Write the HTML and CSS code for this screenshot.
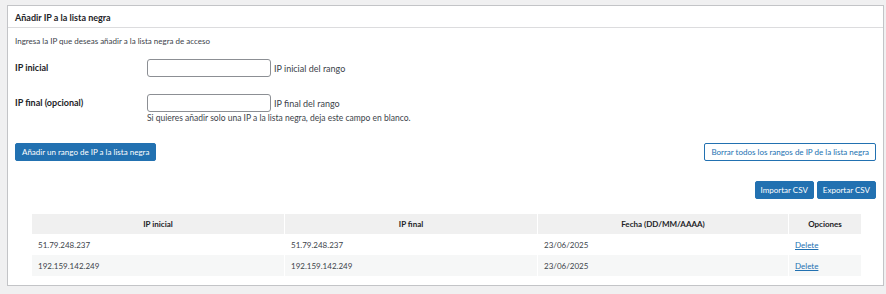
FILE: index.html
```html
<!DOCTYPE html>
<html lang="es">
<head>
    <meta charset="UTF-8">
    <meta name="viewport" content="width=device-width, initial-scale=1.0">
    <title>Lista negra de IP</title>
    <link rel="stylesheet" href="styles.css">
</head>
<body>
    <div class="postbox">
        <!-- Header -->
        <h2 class="postbox-title">Añadir IP a la lista negra</h2>

        <div class="inside">
            <p class="intro">Ingresa la IP que deseas añadir a la lista negra de acceso</p>

            <!-- Range form -->
            <div class="form-row">
                <label class="field-label" for="ip-start">IP inicial</label>
                <div class="field">
                    <div class="field-line">
                        <input type="text" id="ip-start">
                        <span class="hint">IP inicial del rango</span>
                    </div>
                </div>
            </div>
            <div class="form-row second">
                <label class="field-label" for="ip-end">IP final (opcional)</label>
                <div class="field">
                    <div class="field-line">
                        <input type="text" id="ip-end">
                        <span class="hint">IP final del rango</span>
                    </div>
                    <p class="description">Si quieres añadir solo una IP a la lista negra, deja este campo en blanco.</p>
                </div>
            </div>

            <div class="actions">
                <button class="button primary">Añadir un rango de IP a la lista negra</button>
                <button class="button secondary">Borrar todos los rangos de IP de la lista negra</button>
            </div>

            <div class="csv-actions">
                <button class="button primary">Importar CSV</button>
                <button class="button primary">Exportar CSV</button>
            </div>

            <!-- Blacklist table -->
            <table class="ip-table">
                <thead>
                    <tr>
                        <th class="col-ip">IP inicial</th>
                        <th class="col-ip">IP final</th>
                        <th class="col-date">Fecha (DD/MM/AAAA)</th>
                        <th class="col-opt">Opciones</th>
                    </tr>
                </thead>
                <tbody>
                    <tr>
                        <td>51.79.248.237</td>
                        <td>51.79.248.237</td>
                        <td>23/06/2025</td>
                        <td><a href="#">Delete</a></td>
                    </tr>
                    <tr class="alt">
                        <td>192.159.142.249</td>
                        <td>192.159.142.249</td>
                        <td>23/06/2025</td>
                        <td><a href="#">Delete</a></td>
                    </tr>
                </tbody>
            </table>
        </div>
    </div>
</body>
</html>
```

FILE: styles.css
```css
body {
    margin: 0;
    padding: 5px 2px 0 7px;
    background: #f0f0f1;
    font-family: 'Lato', 'Liberation Sans', sans-serif;
    font-size: 9px;
    color: #3c434a;
}
.postbox {
    background: #fff;
    border: 1px solid #c3c4c7;
    height: 281px;
    box-sizing: border-box;
}
.postbox-title {
    margin: 0;
    height: 21px;
    padding: 0 0 0 7px;
    line-height: 23px;
    font-size: 9px;
    font-weight: bold;
    color: #1d2327;
    border-bottom: 1px solid #dcdcde;
}
.inside {
    padding: 0 7px 0 7px;
}
.intro {
    margin: 0;
    padding-top: 7px;
    line-height: 12px;
    font-size: 8px;
}
.form-row {
    display: flex;
    margin-top: 12px;
}
.form-row.second {
    margin-top: 17px;
}
.field-label {
    width: 132px;
    flex: none;
    font-weight: bold;
    color: #1d2327;
    line-height: 18px;
}
.field-line {
    display: flex;
    align-items: center;
}
input[type="text"] {
    width: 124px;
    height: 18px;
    box-sizing: border-box;
    margin: 0 3px 0 0;
    border: 1px solid #8c8f94;
    border-radius: 3px;
    font-size: 9px;
    padding: 0 4px;
}
.hint {
    font-size: 9px;
}
.description {
    margin: 1px 0 0 0;
    font-size: 8.5px;
    line-height: 10px;
}
.actions {
    display: flex;
    justify-content: space-between;
    margin-top: 20px;
}
.button {
    height: 18px;
    padding: 0 6px;
    font-family: inherit;
    font-size: 8px;
    line-height: 16px;
    border-radius: 2px;
    cursor: pointer;
}
.button.primary {
    background: #2271b1;
    border: 1px solid #2271b1;
    color: #fff;
}
.button.secondary {
    background: #fff;
    border: 1px solid #2271b1;
    color: #2271b1;
}
.csv-actions {
    display: flex;
    justify-content: flex-end;
    gap: 3px;
    margin-top: 20px;
}
.csv-actions .button {
    padding: 0 5px;
}
.ip-table {
    margin: 15px 0 0 16px;
    width: 831px;
    border-collapse: separate;
    border-spacing: 1px 0;
    font-size: 8px;
}
.ip-table th {
    background: #f0f0f0;
    height: 20px;
    padding: 0;
    color: #1d2327;
    font-weight: bold;
}
.ip-table td {
    height: 21px;
    padding: 0 6px;
}
.ip-table tr.alt td {
    background: #f6f7f7;
}
.col-ip {
    width: 252px;
}
.col-date {
    width: 250px;
}
.ip-table a {
    color: #2271b1;
}
```
